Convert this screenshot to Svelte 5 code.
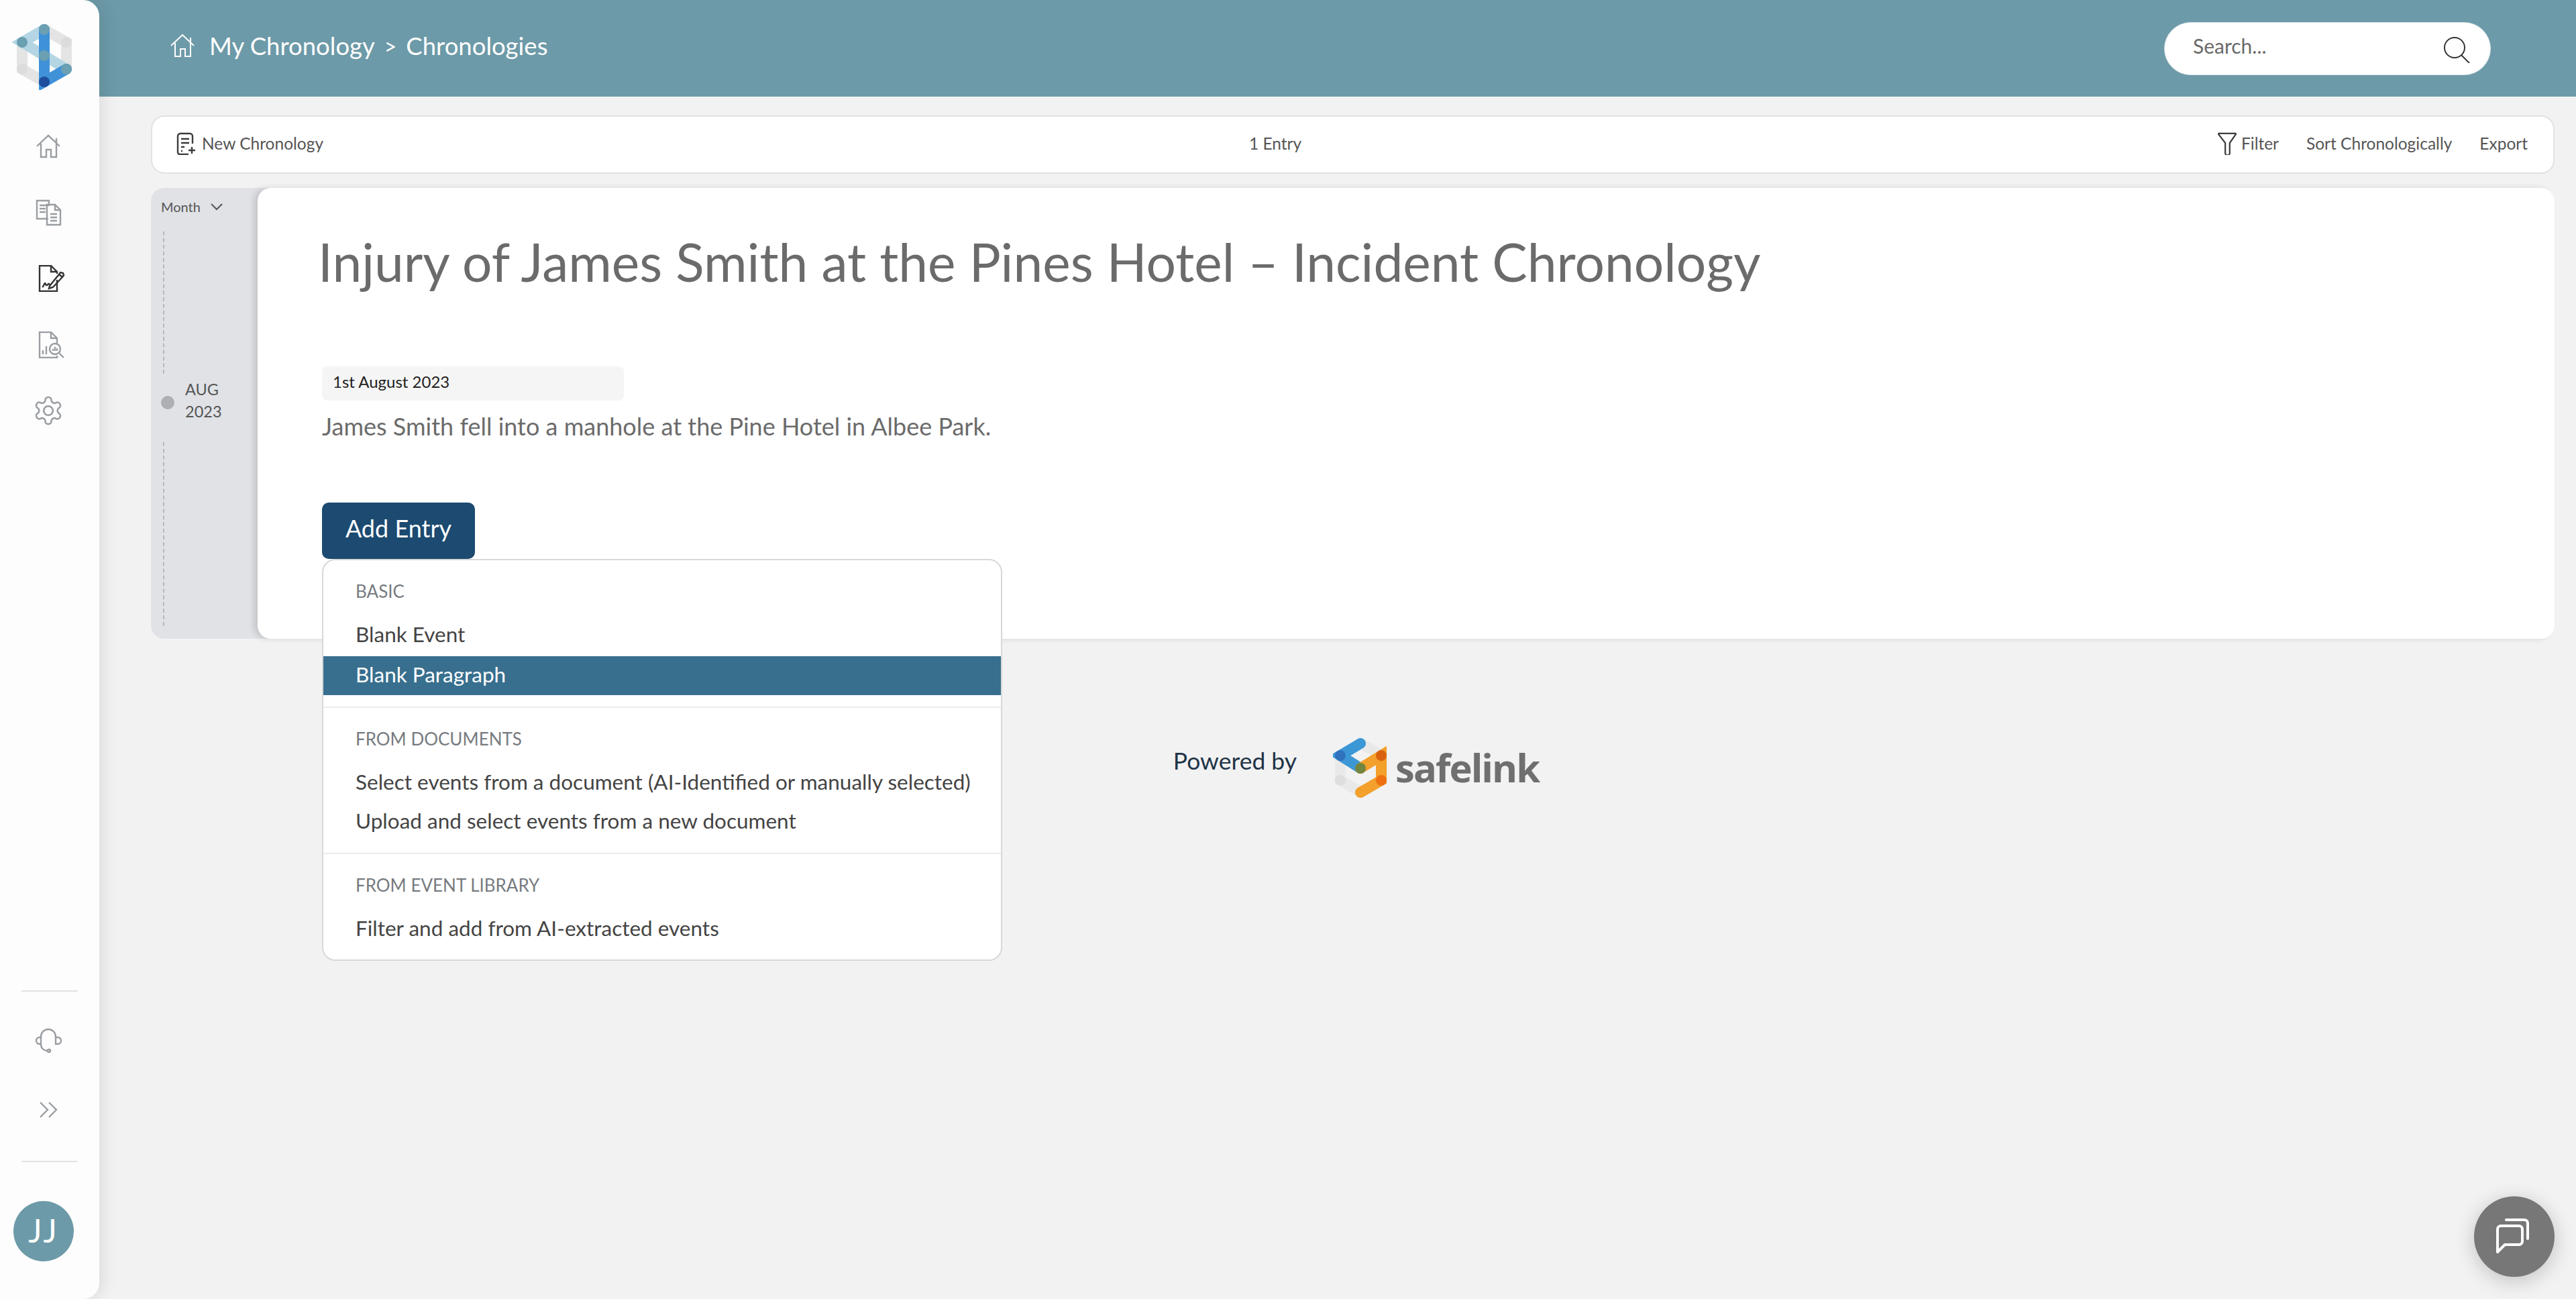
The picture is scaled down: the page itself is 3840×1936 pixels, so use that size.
<script>
	const nav = ['home', 'docs', 'sign', 'report', 'gear'];
	const menu = [
		{ title: 'BASIC', items: ['Blank Event', 'Blank Paragraph'] },
		{ title: 'FROM DOCUMENTS', items: ['Select events from a document (AI-Identified or manually selected)', 'Upload and select events from a new document'] },
		{ title: 'FROM EVENT LIBRARY', items: ['Filter and add from AI-extracted events'] }
	];
</script>

{#snippet homeIcon()}
	<path d="M3 20 20 4l17 16M32 8v8M9 16v20h8V25h7v11h8V16" />
{/snippet}

<div class="app">
	<aside class="sidebar">
		<svg class="logo" viewBox="0 0 100 104">
			<g fill="none" stroke-width="16" stroke-linecap="round">
				<path d="M50 14 83 33v40" stroke="#e4e4e4" />
				<path d="M17 33v40l33 19" stroke="#e4e4e4" />
				<path d="M50 14 17 33l66 40" stroke="#b4d6e4" />
				<path d="M50 14v78l33-19" stroke="#3f92d8" />
			</g>
			<circle cx="50" cy="14" r="8" fill="#6b9fb2" />
			<circle cx="17" cy="33" r="8" fill="#6b9fb2" />
			<circle cx="50" cy="53" r="8" fill="#6b9fb2" />
			<circle cx="83" cy="73" r="8" fill="#6b9fb2" />
			<circle cx="50" cy="92" r="8" fill="#1f4f9c" />
			<circle cx="83" cy="33" r="8" fill="#dcdcdc" />
			<circle cx="17" cy="73" r="8" fill="#dcdcdc" />
		</svg>

		<nav class="nav">
			{#each nav as item}
				<div class="nav-item" class:active={item === 'sign'} class:shift={item === 'sign' || item === 'report'}>
					{#if item === 'home'}
						<svg viewBox="0 0 40 40">{@render homeIcon()}</svg>
					{:else if item === 'docs'}
						<svg viewBox="0 0 40 40">
							<path d="M20 29H3V2h18v8M7 9h13M7 14h9M7 19h9" />
							<path d="M18 8h12l8 8v22H18zM30 8v8h8M23 22h10M23 27h10M23 32h10" />
						</svg>
					{:else if item === 'sign'}
						<svg viewBox="0 0 40 40">
							<path d="M28 22v17H2V1h17l9 9v3M19 1v9h9" />
							<path d="M6 33c2-1 3-6 4-6s1 4 3 3 2-3 3-2 1 2 3 2M17 31l14-17 5 4-14 15-6 2zM31 14l2-3 4 1 1 3-2 3" />
						</svg>
					{:else if item === 'report'}
						<svg viewBox="0 0 40 40">
							<path d="M28 20V10l-9-9H2v38h26v-3M19 1v9h9M7 34v-6M12 34V22" />
							<circle cx="25" cy="26" r="8" />
							<path d="M22 29v-3M25 29v-6M28 29v-4M31 32l7 7" />
						</svg>
					{:else}
						<svg viewBox="0 0 24 24" class="gear">
							<path d="M12.22 2h-.44a2 2 0 0 0-2 2v.18a2 2 0 0 1-1 1.73l-.43.25a2 2 0 0 1-2 0l-.15-.08a2 2 0 0 0-2.73.73l-.22.38a2 2 0 0 0 .73 2.73l.15.1a2 2 0 0 1 1 1.72v.51a2 2 0 0 1-1 1.74l-.15.09a2 2 0 0 0-.73 2.73l.22.38a2 2 0 0 0 2.73.73l.15-.08a2 2 0 0 1 2 0l.43.25a2 2 0 0 1 1 1.73V20a2 2 0 0 0 2 2h.44a2 2 0 0 0 2-2v-.18a2 2 0 0 1 1-1.73l.43-.25a2 2 0 0 1 2 0l.15.08a2 2 0 0 0 2.73-.73l.22-.39a2 2 0 0 0-.73-2.73l-.15-.08a2 2 0 0 1-1-1.74v-.5a2 2 0 0 1 1-1.74l.15-.09a2 2 0 0 0 .73-2.73l-.22-.38a2 2 0 0 0-2.73-.73l-.15.08a2 2 0 0 1-2 0l-.43-.25a2 2 0 0 1-1-1.73V4a2 2 0 0 0-2-2z" />
							<circle cx="12" cy="12" r="3.4" />
						</svg>
					{/if}
				</div>
			{/each}
		</nav>

		<div class="side-bottom">
			<div class="rule"></div>
			<div class="nav-item small first">
				<svg viewBox="0 0 40 40">
					<path d="M9 17v-2a11 11 0 0 1 22 0v2M9 26c0 6 4 10 10 10" />
					<path d="M9 16H7a4.500 4.500 0 0 0 0 10h2zM31 16h3a5 5 0 0 1 0 10h-3z" />
					<circle cx="21" cy="36" r="2" />
				</svg>
			</div>
			<div class="nav-item small second">
				<svg viewBox="0 0 40 40"><path d="M8 9l11 11L8 31M21 9l11 11-11 11" /></svg>
			</div>
			<div class="rule"></div>
			<div class="avatar">JJ</div>
		</div>
	</aside>

	<div class="content">
		<header class="topbar">
			<div class="crumbs">
				<svg viewBox="0 0 40 40">{@render homeIcon()}</svg>
				<span class="crumb-first">My Chronology</span>
				<span class="sep">&gt;</span>
				<span>Chronologies</span>
			</div>
			<div class="search">
				<span>Search...</span>
				<svg viewBox="0 0 40 40"><circle cx="17" cy="17" r="15" /><path d="M27 28l12 12" /></svg>
			</div>
		</header>

		<main class="page">
			<div class="toolbar">
				<div class="tool">
					<svg class="tool-icon" viewBox="0 0 30 34">
						<path d="M24 17V6a4 4 0 0 0-4-4H6a4 4 0 0 0-4 4v24a3 3 0 0 0 3 3h13M7 10h12M7 16h12M7 22h5M7 28h2M18 27h10M23 22v10" />
					</svg>
					New Chronology
				</div>
				<div class="entries">1 Entry</div>
				<div class="tool-right">
					<div class="tool filter">
						<svg class="tool-icon" viewBox="0 0 30 36">
							<path d="M3 2h24a1 1 0 0 1 1 2L19 17v16a3 3 0 0 1-7 0V17L2 4a1 1 0 0 1 1-2z" />
						</svg>
						Filter
					</div>
					<div class="tool">Sort Chronologically</div>
					<div class="tool">Export</div>
				</div>
			</div>

			<section class="panel">
				<div class="timeline">
					<div class="month">
						Month
						<svg viewBox="0 0 20 12"><path d="M2 2l8 8 8-8" /></svg>
					</div>
					<div class="dash first-dash"></div>
					<div class="tick">
						<span class="dot"></span>
						<span class="tick-label">AUG<br />2023</span>
					</div>
					<div class="dash last-dash"></div>
				</div>

				<div class="sheet">
					<h1>Injury of James Smith at the Pines Hotel – Incident Chronology</h1>
					<div class="date">1st August 2023</div>
					<p class="desc">James Smith fell into a manhole at the Pine Hotel in Albee Park.</p>
					<div class="add-wrap">
						<button class="add">Add Entry</button>
						<div class="menu">
							{#each menu as group}
								<div class="group">
									<div class="group-title">{group.title}</div>
									{#each group.items as item}
										<div class="menu-item" class:hover={item === 'Blank Paragraph'}>{item}</div>
									{/each}
								</div>
							{/each}
						</div>
					</div>
				</div>
			</section>

			<div class="powered">
				<span class="powered-label">Powered by</span>
				<div class="brand">
					<svg viewBox="0 0 85 95">
						<g fill="none" stroke-width="16" stroke-linecap="round">
							<path d="M42 12 11 30v37l31 18 31-18V30L42 12" stroke="#e9e9e9" />
							<path d="M41 12 11 30l30 19" stroke="#3c97d6" />
							<path d="M41 49l31-19v37L41 85" stroke="#f3a02c" />
						</g>
						<circle cx="11" cy="30" r="8" fill="#2f72bd" />
						<circle cx="41" cy="49" r="8" fill="#73863f" />
						<circle cx="72" cy="30" r="8" fill="#d9620f" />
						<circle cx="72" cy="67" r="8" fill="#ee7013" />
						<circle cx="11" cy="67" r="8" fill="#dedede" />
					</svg>
					<span class="brand-name">safelink</span>
				</div>
			</div>
		</main>
	</div>

	<button class="chat" aria-label="Chat">
		<svg viewBox="0 0 56 56">
			<path d="M16 3h27a5 5 0 0 1 5 5v23" />
			<path d="M8 12h27a5 5 0 0 1 5 5v18a5 5 0 0 1-5 5H14L3 51V17a5 5 0 0 1 5-5z" />
		</svg>
	</button>
</div>

<style>
	:global(body) {
		margin: 0;
		background: #f2f2f2;
	}

	.app {
		position: relative;
		display: flex;
		height: 100vh;
		overflow: hidden;
		font-family: Lato, "Noto Sans", sans-serif;
		color: #555;
	}

	svg {
		display: block;
		fill: none;
		stroke: currentColor;
		stroke-width: 2;
	}

	.sidebar {
		position: relative;
		z-index: 2;
		display: flex;
		flex-direction: column;
		flex: 0 0 148px;
		background: #fdfdfd;
		border-radius: 0 24px 24px 0;
		box-shadow: 6px 0 24px rgba(0, 0, 0, 0.09);
	}

	.logo {
		width: 100px;
		height: 104px;
		margin: 30px 0 0 16px;
		stroke: none;
	}

	.nav {
		display: flex;
		flex-direction: column;
		align-items: center;
		gap: 58.500px;
		margin-top: 64px;
		padding-right: 4px;
	}

	.nav-item {
		width: 40px;
		height: 40px;
		color: #9a9ea2;
	}

	.nav-item svg {
		stroke-width: 2.400;
	}

	.nav-item.active {
		color: #333;
	}

	.nav-item.shift {
		margin-left: 10px;
	}

	.nav-item .gear {
		width: 48px;
		height: 48px;
		margin: -4px;
		stroke-width: 1.300;
	}

	.side-bottom {
		margin-top: auto;
		display: flex;
		flex-direction: column;
		align-items: center;
		padding-bottom: 56px;
	}

	.rule {
		width: 84px;
		height: 2px;
		background: #e2e2e2;
	}

	.nav-item.first {
		margin: 52px 4px 0 0;
	}

	.nav-item.second {
		margin: 64px 4px 56px 0;
	}

	.avatar {
		align-self: flex-start;
		margin: 58px 0 0 20px;
		width: 90px;
		height: 90px;
		border-radius: 50%;
		background: #6d9aa8;
		color: #fff;
		font-size: 48px;
		letter-spacing: 3px;
		line-height: 88px;
		text-align: center;
	}

	.content {
		flex: 1;
		min-width: 0;
		display: flex;
		flex-direction: column;
	}

	.topbar {
		display: flex;
		align-items: center;
		justify-content: space-between;
		height: 144px;
		margin-left: -30px;
		padding: 0 127px 0 134px;
		background: #6d9aa8;
		color: #fff;
	}

	.crumbs {
		display: flex;
		align-items: center;
		padding-bottom: 8px;
		font-size: 36.500px;
	}

	.crumbs svg {
		width: 40px;
		height: 40px;
		margin-right: 20px;
		stroke-width: 2;
	}

	.sep {
		margin: 0 14px;
		font-size: 32px;
	}

	.search {
		display: flex;
		align-items: center;
		justify-content: space-between;
		box-sizing: border-box;
		width: 487px;
		height: 79px;
		padding: 0 30px 0 42px;
		border-radius: 40px;
		background: #fff;
		border: 1px solid #dbe6ea;
		color: #6a6a6a;
		font-size: 30px;
	}

	.search span {
		padding-bottom: 8px;
	}

	.search svg {
		width: 40px;
		height: 40px;
		color: #333;
		margin-top: 4px;
	}

	.page {
		padding: 28px 32px 0 77px;
	}

	.toolbar {
		display: grid;
		grid-template-columns: 1599px auto 1fr;
		align-items: center;
		box-sizing: border-box;
		height: 87px;
		padding: 0 38px 4px 36px;
		background: #fff;
		border: 2px solid #e2e2e2;
		border-radius: 20px;
		font-size: 24.500px;
		color: #555;
	}

	.tool {
		display: flex;
		align-items: center;
	}

	.tool-icon {
		width: 30px;
		height: 34px;
		margin-right: 8px;
		color: #3c3c3c;
		stroke-width: 2.400;
	}

	.filter .tool-icon {
		margin-right: 6px;
	}

	.tool-right {
		display: flex;
		justify-content: flex-end;
		gap: 41px;
	}

	.panel {
		position: relative;
		display: flex;
		margin-top: 21px;
		height: 672px;
		border-radius: 20px;
		background: #e0e2e6;
	}

	.timeline {
		flex: 0 0 159px;
		box-sizing: border-box;
		padding: 16px 0 0 15px;
		color: #555;
		font-size: 20px;
	}

	.month {
		display: flex;
		align-items: center;
		height: 24px;
	}

	.month svg {
		width: 20px;
		height: 12px;
		margin-left: 14px;
	}

	.dash {
		width: 0;
		margin-left: 3px;
		border-left: 2px dashed #b7b9bd;
	}

	.first-dash {
		height: 212px;
		margin-top: 25px;
	}

	.last-dash {
		height: 274px;
		margin-top: 24px;
	}

	.tick {
		display: flex;
		align-items: center;
		margin-top: 7px;
	}

	.dot {
		width: 20px;
		height: 20px;
		border-radius: 50%;
		background: #adafb4;
	}

	.tick-label {
		margin: 0 0 5px 16px;
		font-size: 23.500px;
		line-height: 33px;
	}

	.sheet {
		flex: 1;
		min-width: 0;
		box-sizing: border-box;
		padding: 62px 0 0 96px;
		background: #fff;
		border-radius: 20px;
		box-shadow: -6px 0 10px rgba(0, 0, 0, 0.12);
	}

	h1 {
		margin: 0 0 0 -6px;
		font-size: 78.500px;
		font-weight: 400;
		line-height: 96px;
		color: #6b6b6b;
	}

	.date {
		box-sizing: border-box;
		width: 450px;
		height: 51px;
		margin-top: 108px;
		padding: 0 16px;
		border-radius: 8px;
		background: #f5f5f5;
		color: #222;
		font-size: 24px;
		line-height: 46px;
	}

	.desc {
		margin: 16px 0 0;
		font-size: 36px;
		line-height: 44px;
		color: #6b6b6b;
	}

	.add-wrap {
		position: relative;
		margin-top: 92px;
		width: 1014px;
	}

	.add {
		display: block;
		width: 228px;
		height: 84px;
		padding: 0 0 8px;
		border: 0;
		border-radius: 10px;
		background: #1c4a70;
		color: #fff;
		font: inherit;
		font-size: 36px;
	}

	.menu {
		position: absolute;
		top: 84px;
		left: 0;
		right: 0;
		box-sizing: border-box;
		height: 599px;
		padding-top: 21px;
		background: #fff;
		border: 2px solid #d8d8d8;
		border-radius: 20px;
		overflow: hidden;
	}

	.group + .group {
		margin-top: 17px;
		padding-top: 21px;
		border-top: 2px solid #ececec;
	}

	.group-title {
		height: 50px;
		margin-bottom: 12px;
		padding-left: 48px;
		font-size: 26px;
		line-height: 50px;
		color: #777b80;
	}

	.menu-item {
		height: 58px;
		padding-left: 48px;
		font-size: 31.500px;
		line-height: 54px;
		color: #444;
		white-space: nowrap;
	}

	.menu-item.hover {
		margin-top: 2px;
		background: #386f8e;
		color: #fff;
	}

	.powered {
		display: flex;
		align-items: center;
		justify-content: center;
		gap: 54px;
		margin-top: 144px;
		padding-left: 10px;
		font-size: 35.500px;
		color: #1f3447;
	}

	.powered-label {
		margin-bottom: 20px;
	}

	.brand {
		display: flex;
		align-items: center;
		gap: 8px;
	}

	.brand svg {
		width: 85px;
		height: 95px;
		stroke: none;
	}

	.brand-name {
		font-family: "Open Sans", sans-serif;
		font-size: 58px;
		font-weight: 700;
		letter-spacing: -2px;
		color: #6f6f6f;
		line-height: 1;
	}

	.chat {
		position: absolute;
		right: 32px;
		bottom: 33px;
		width: 120px;
		height: 120px;
		padding: 32px;
		border: 0;
		border-radius: 50%;
		background: #777;
		color: #fff;
		box-shadow: 0 6px 30px rgba(0, 0, 0, 0.2);
	}

	.chat svg {
		width: 56px;
		height: 56px;
		stroke-width: 4;
		stroke-linecap: round;
		stroke-linejoin: round;
	}
</style>
